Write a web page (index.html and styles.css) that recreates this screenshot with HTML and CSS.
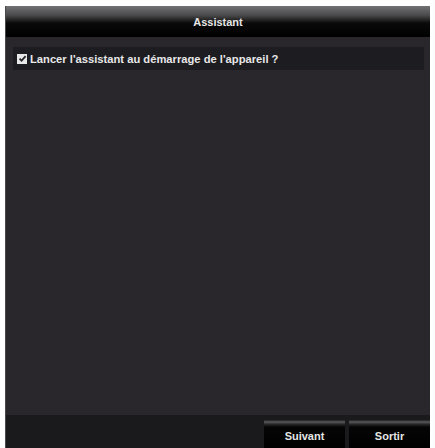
FILE: index.html
```
<!DOCTYPE html>
<html>
<head>
<meta charset="utf-8">
<link rel="stylesheet" href="styles.css">
</head>
<body>
<div class="window">
  <div class="titlebar">Assistant</div>
  <div class="content">
    <div class="option-row">
      <span class="checkbox">
        <svg width="9" height="9" viewBox="0 0 9 9"><path d="M1.5 4.6 L3.6 6.7 L7.6 2.2" fill="none" stroke="#2a282d" stroke-width="1.8"/></svg>
      </span>
      <span class="label">Lancer l'assistant au démarrage de l'appareil ?</span>
    </div>
  </div>
  <div class="footer">
    <button class="btn">Suivant</button>
    <button class="btn">Sortir</button>
  </div>
</div>
</body>
</html>
```
FILE: styles.css
```
html, body {
  margin: 0;
  padding: 0;
  background: #ffffff;
  height: 448px;
  overflow: hidden;
}
body {
  padding: 6px 5px 0 5px;
  box-sizing: border-box;
  font-family: "Liberation Sans", Arial, sans-serif;
}
.window {
  height: 442px;
  background: #29272c;
  display: flex;
  flex-direction: column;
  border-left: 1px solid #4a484d;
}
.titlebar {
  height: 31px;
  flex: none;
  background: linear-gradient(to bottom, #727274 0%, #4a4a4c 30%, #0a0a0a 55%, #000 100%);
  color: #e6e6e6;
  font-size: 11px;
  font-weight: bold;
  text-align: center;
  line-height: 32px;
}
.content {
  flex: 1;
  padding: 10px 6px 0 7px;
}
.option-row {
  height: 23px;
  background: #1d1c21;
  display: flex;
  align-items: center;
  padding-left: 4px;
  gap: 3px;
}
.checkbox {
  width: 10px;
  height: 10px;
  background: #e8e8e8;
  display: flex;
  align-items: center;
  justify-content: center;
}
.label {
  color: #e8e8e8;
  font-size: 11.2px;
  font-weight: bold;
  padding-top: 1px;
}
.footer {
  height: 33px;
  flex: none;
  background: #1a191c;
  display: flex;
  justify-content: flex-end;
  align-items: flex-end;
  gap: 4px;
}
.btn {
  width: 81px;
  height: 28px;
  border: none;
  margin: 0;
  padding: 4px 0 0 0;
  background: linear-gradient(to bottom, #1e1e20 0px, #5a5a5c 2px, #2a2a2c 4px, #050505 7px, #000 100%);
  color: #e6e6e6;
  font-family: "Liberation Sans", Arial, sans-serif;
  font-size: 11px;
  font-weight: bold;
}
```
